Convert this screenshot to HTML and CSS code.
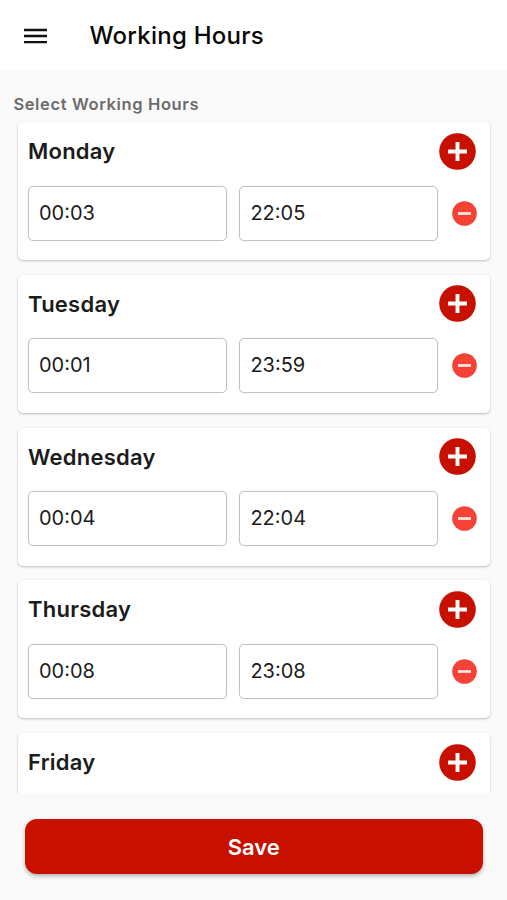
FILE: index.html
```html
<!DOCTYPE html>
<html lang="en">
<head>
<meta charset="utf-8">
<title>Working Hours</title>
<link rel="stylesheet" href="styles.css">
</head>
<body>
<svg class="defs" aria-hidden="true">
  <symbol id="add" viewBox="0 0 37 37"><circle cx="18.5" cy="18.5" r="18.3" fill="#c81000"/><path d="M18.5 9v19M9 18.5h19" stroke="#fff" stroke-width="3.9"/></symbol>
  <symbol id="remove" viewBox="0 0 25 25"><circle cx="12.5" cy="12.5" r="12.3" fill="#f44336"/><path d="M6 12.5h13" stroke="#ffe9e6" stroke-width="2.7"/></symbol>
</svg>
<header class="bar">
  <svg class="menu" viewBox="0 0 23 16"><path d="M0 2h23M0 8h23M0 14.1h23" stroke="#111" stroke-width="2.3"/></svg>
  <h1>Working Hours</h1>
</header>
<main class="content">
  <h2 class="label">Select Working Hours</h2>
  <div class="list">
    <section class="card">
      <div class="head"><h3>Monday</h3><svg class="add"><use href="#add"/></svg></div>
      <div class="row"><div class="time">00:03</div><div class="time">22:05</div><svg class="remove"><use href="#remove"/></svg></div>
    </section>
    <section class="card">
      <div class="head"><h3>Tuesday</h3><svg class="add"><use href="#add"/></svg></div>
      <div class="row"><div class="time">00:01</div><div class="time">23:59</div><svg class="remove"><use href="#remove"/></svg></div>
    </section>
    <section class="card">
      <div class="head"><h3>Wednesday</h3><svg class="add"><use href="#add"/></svg></div>
      <div class="row"><div class="time">00:04</div><div class="time">22:04</div><svg class="remove"><use href="#remove"/></svg></div>
    </section>
    <section class="card">
      <div class="head"><h3>Thursday</h3><svg class="add"><use href="#add"/></svg></div>
      <div class="row"><div class="time">00:08</div><div class="time">23:08</div><svg class="remove"><use href="#remove"/></svg></div>
    </section>
    <section class="card">
      <div class="head"><h3>Friday</h3><svg class="add"><use href="#add"/></svg></div>
    </section>
  </div>
</main>
<footer class="footer"><button class="save">Save</button></footer>
</body>
</html>
```

FILE: styles.css
```css
* { box-sizing: border-box; }
body { margin: 0; height: 900px; display: flex; flex-direction: column; overflow: hidden; background: #fafafa; color: #1c1c1c; font-family: Inter, sans-serif; }
h1, h2, h3 { margin: 0; }
.defs { position: absolute; width: 0; height: 0; }
.bar { flex: none; height: 71px; display: flex; align-items: center; gap: 42.5px; padding: 0 0 0 24px; background: #fff; }
.menu { width: 23px; height: 16px; }
h1 { font-size: 24px; font-weight: 450; line-height: 30px; letter-spacing: .25px; color: #080808; }
.content { flex: none; height: 722px; padding-top: 21.6px; display: flex; flex-direction: column; overflow: hidden; }
.label { padding-left: 13.4px; font-size: 16.5px; line-height: 22px; font-weight: 600; letter-spacing: .62px; color: #6c6c6c; }
.list { padding: 7.6px 17px 0 18px; display: flex; flex-direction: column; gap: 14.7px; }
.card { flex: none; height: 138px; padding: 10.6px 13px 0 10px; background: #fff; border-radius: 5px; box-shadow: 0 1px 2.5px rgba(0,0,0,.25); }
.head { display: flex; align-items: center; justify-content: space-between; height: 37px; }
h3 { font-size: 22px; line-height: 28px; font-weight: 600; letter-spacing: .24px; }
.add { width: 37px; height: 37px; margin-right: 1px; }
.row { display: flex; align-items: center; gap: 12.4px; margin-top: 15.9px; }
.time { flex: none; width: 199px; height: 55px; padding-left: 10px; border: 1px solid #bfc3cb; border-radius: 5px; box-shadow: 0 0 1px #c8ccd2; font-size: 20px; line-height: 53px; }
.remove { flex: none; width: 25px; height: 25px; margin-left: 1.5px; }
.footer { flex: 1; padding: 26px 24.5px 0 25px; }
.save { display: block; width: 100%; height: 55px; border: 0; border-radius: 12px; background: #c81000; color: #fff; font: 600 22px Inter, sans-serif; box-shadow: 0 2px 4px rgba(0,0,0,.3); }
```
